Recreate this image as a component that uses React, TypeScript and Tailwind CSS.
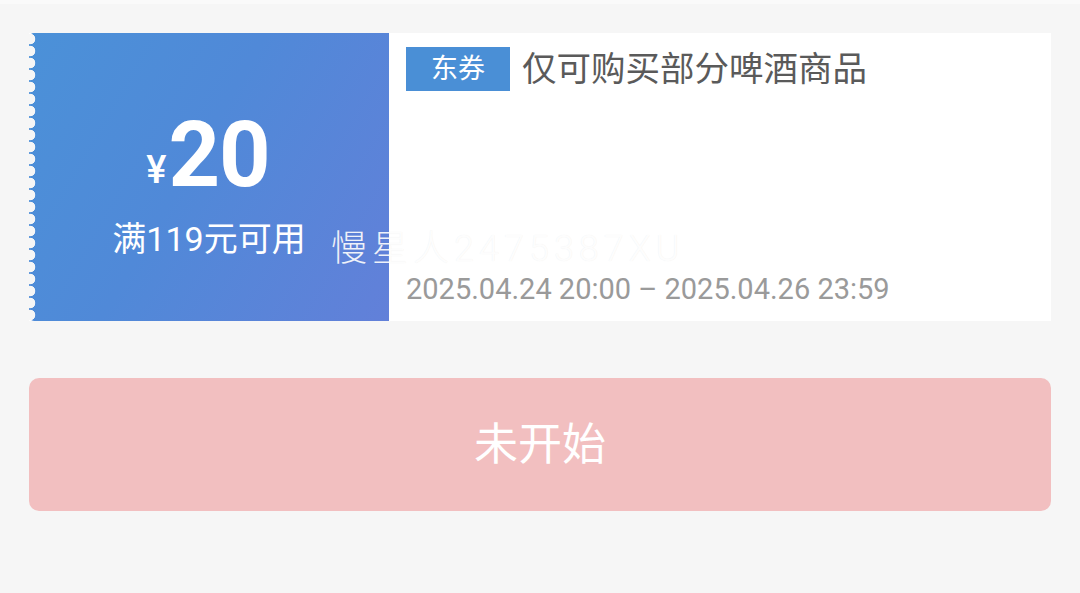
const font = { fontFamily: '"Roboto", "Noto Sans CJK SC", sans-serif' }

const CouponCard = () => {
  return (
    <div className="relative flex h-[288px] bg-white">
      <div className="relative flex w-[360px] flex-col items-center rounded-l-[5px] bg-[linear-gradient(120deg,#4b91d8_0%,#5089d8_45%,#6280d9_100%)] text-white">
        {/* scalloped edge */}
        <div className="absolute left-0 top-0 h-full w-[7px] bg-[radial-gradient(circle_at_1px_6px,#f6f6f6_5px,transparent_5.6px)] bg-[length:7px_12px] bg-repeat-y" />
        <div className="mt-[84px] ml-[-2px] flex items-end">
          <span className="mb-[6px] mr-[2px] text-[38px] font-medium leading-none">¥</span>
          <span className="text-[90px] font-bold leading-[78px] tracking-[-1px]">20</span>
        </div>
        <p className="mt-[27px] text-[34px] leading-none">满119元可用</p>
      </div>

      <div className="flex flex-1 flex-col pl-[17px] pt-[14px]">
        <div className="flex items-center gap-[12px]">
          <span className="flex h-[44px] w-[104px] items-center justify-center bg-[#4a8fd6] text-[27px] text-white">
            东券
          </span>
          <span className="text-[34.5px] leading-none text-[#5a5a5a]">仅可购买部分啤酒商品</span>
        </div>
        <p className="mt-auto mb-[17px] text-[29px] leading-none text-[#9a9a9a]">
          2025.04.24 20:00 – 2025.04.26 23:59
        </p>
      </div>

      {/* watermark */}
      <span className="pointer-events-none absolute left-[302px] top-[198px] text-[36px] font-light leading-none tracking-[5px] text-white/90 [text-shadow:0_0_1px_rgba(0,0,0,0.08)]">
        慢星人2475387XU
      </span>
    </div>
  )
}

export default function App() {
  return (
    <div className="h-[593px] w-[1080px] bg-[#f6f6f6]" style={font}>
      <div className="h-[4px] bg-[#fafafa]" />
      <div className="px-[29px] pt-[29px]">
        <CouponCard />
        <button
          type="button"
          className="mt-[57px] flex h-[133px] w-full items-center justify-center rounded-[10px] bg-[#f2bfc0] text-[44px] text-white"
        >
          未开始
        </button>
      </div>
    </div>
  )
}
